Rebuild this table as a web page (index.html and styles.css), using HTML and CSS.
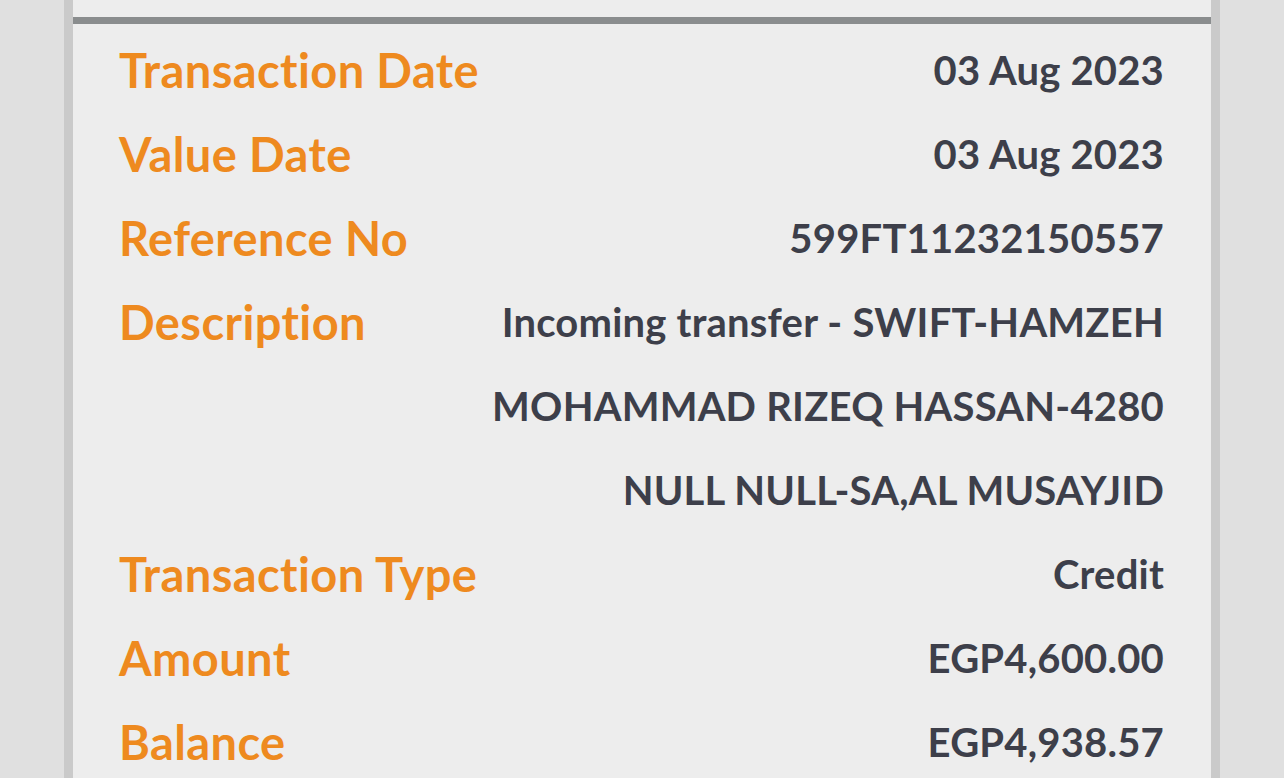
FILE: index.html
```html
<!DOCTYPE html>
<html lang="en">
<head>
<meta charset="utf-8">
<title>Transaction Details</title>
<link rel="stylesheet" href="styles.css">
</head>
<body>
<div class="page">
  <section class="card">
    <div class="card-top"></div>
    <dl class="details">
      <div class="row"><dt class="label">Transaction Date</dt><dd class="value">03 Aug 2023</dd></div>
      <div class="row"><dt class="label">Value Date</dt><dd class="value">03 Aug 2023</dd></div>
      <div class="row"><dt class="label">Reference No</dt><dd class="value">599FT11232150557</dd></div>
      <div class="row"><dt class="label">Description</dt><dd class="value">Incoming transfer - SWIFT-HAMZEH<br>MOHAMMAD RIZEQ HASSAN-4280<br>NULL NULL-SA,AL MUSAYJID</dd></div>
      <div class="row"><dt class="label">Transaction Type</dt><dd class="value">Credit</dd></div>
      <div class="row"><dt class="label">Amount</dt><dd class="value">EGP4,600.00</dd></div>
      <div class="row"><dt class="label">Balance</dt><dd class="value">EGP4,938.57</dd></div>
    </dl>
  </section>
</div>
</body>
</html>
```

FILE: styles.css
```css
html, body {
  margin: 0;
  padding: 0;
  height: 100%;
  overflow: hidden;
}
body {
  background: #e0e0e0;
  font-family: "Lato", "Open Sans", sans-serif;
  font-variant-ligatures: none;
}
.page {
  height: 100%;
  padding-left: 64px;
  width: 1220px;
  box-sizing: border-box;
  background:
    radial-gradient(ellipse 300px 700px at -120px 480px, transparent 96%, rgba(255,255,255,0.35) 98%, transparent 100%),
    radial-gradient(ellipse 260px 600px at 1420px 700px, transparent 96%, rgba(255,255,255,0.35) 98%, transparent 100%);
}
.card {
  height: 100%;
  background: #ededed;
  border-left: 9px solid #cacaca;
  border-right: 9px solid #cacaca;
}
.card-top {
  height: 17px;
  border-bottom: 7px solid #8a8d8e;
}
.details {
  margin: 0;
  padding: 4px 47px 0 46px;
}
.row {
  display: flex;
  justify-content: space-between;
  align-items: flex-start;
}
.label {
  margin: 0;
  color: #ee8a1f;
  font-weight: 700;
  font-size: 47px;
  letter-spacing: 0.4px;
  line-height: 84px;
  white-space: nowrap;
}
.value {
  margin: 0;
  color: #3d3f4a;
  font-weight: 700;
  font-size: 40px;
  letter-spacing: 0.2px;
  line-height: 84px;
  text-align: right;
  white-space: nowrap;
}
```
